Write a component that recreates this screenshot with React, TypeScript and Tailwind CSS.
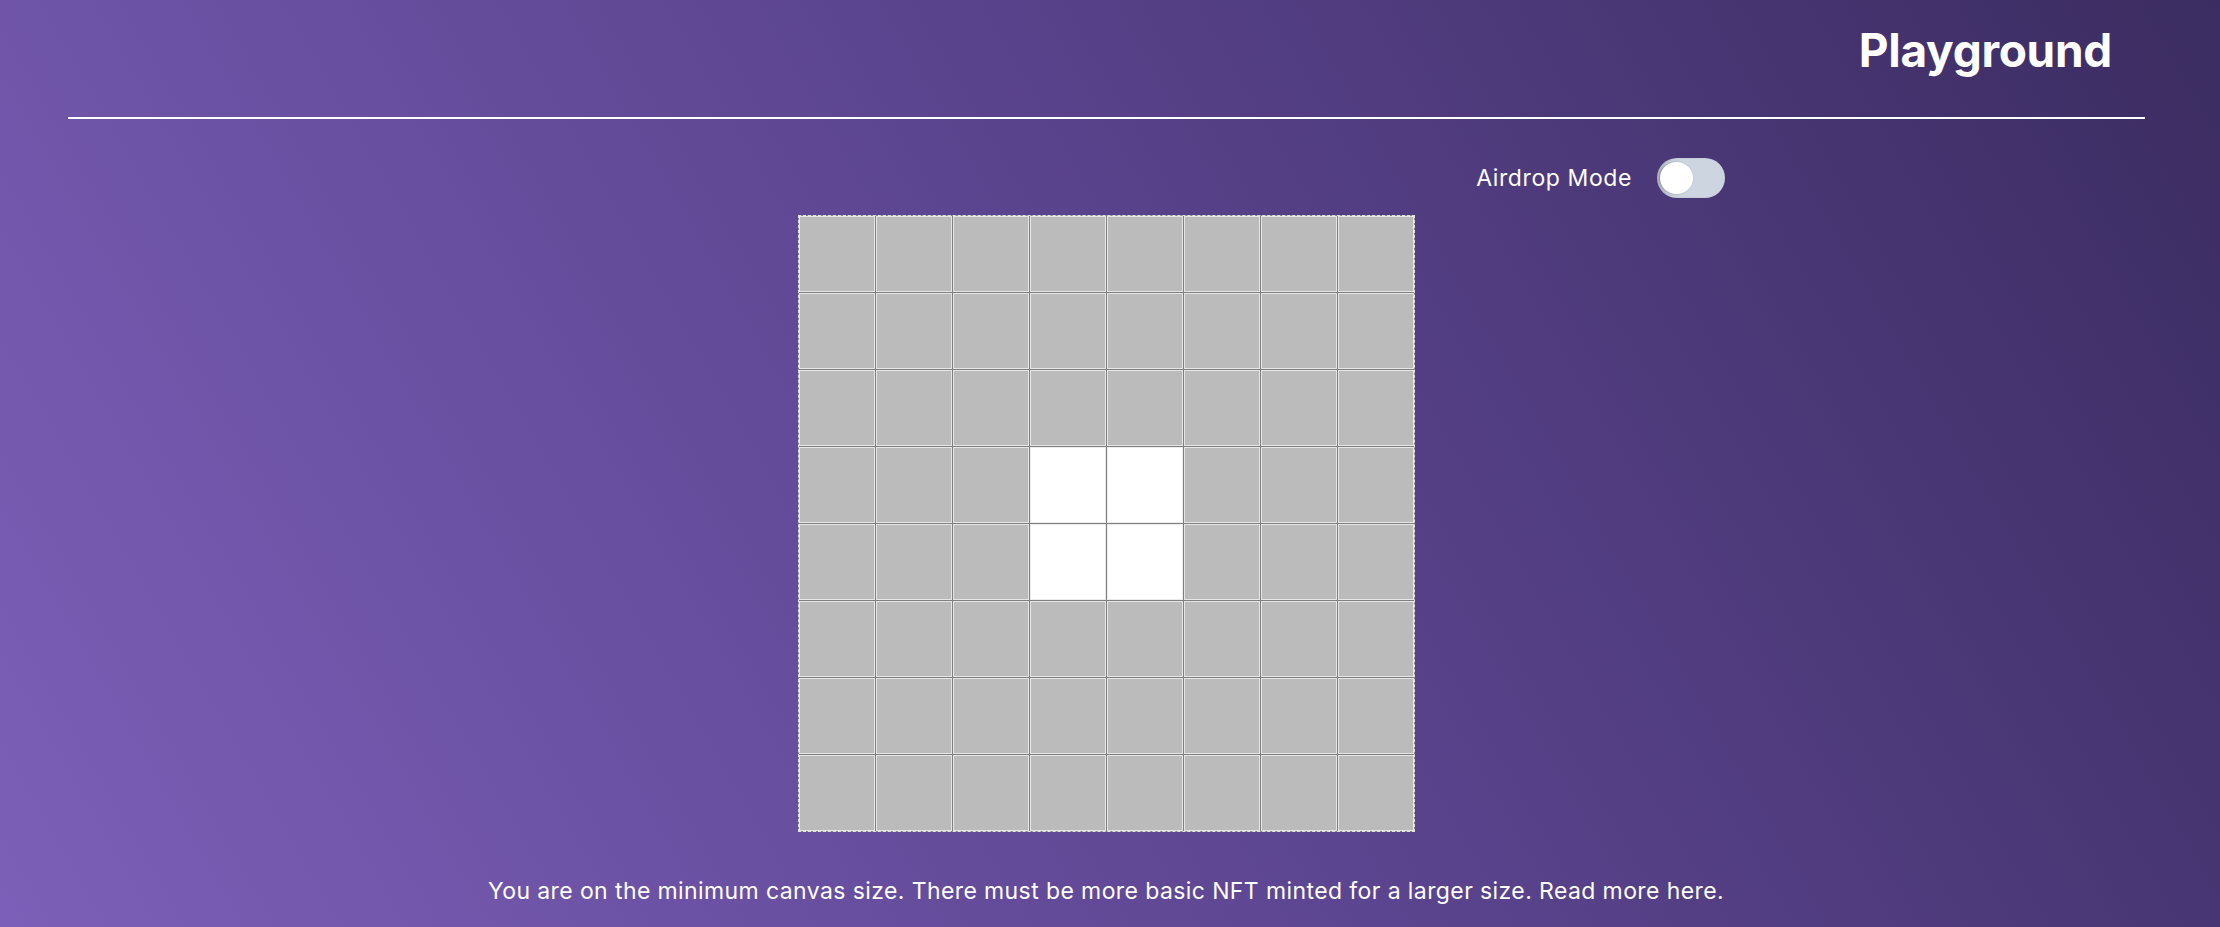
const SIZE = 8;
const lit = new Set(["3-3", "3-4", "4-3", "4-4"]);

const Toggle = () => (
  <div className="relative w-[68px] h-[40px] rounded-full bg-[#cdd5e0] shadow-[inset_2px_0_2px_rgba(0,0,0,0.15)]">
    <div className="absolute left-[3px] top-[4px] w-[33px] h-[32px] rounded-full bg-white shadow-[-1px_0_2px_rgba(0,0,0,0.35)]" />
  </div>
);

export default function App() {
  return (
    <div className="w-full min-h-[927px] bg-linear-60 from-[#7c5fb8] via-[#5c4590] to-[#3b2c61] font-['Inter',sans-serif] text-white">
      <div className="flex justify-end pt-[26px] pr-[108px]">
        <h1 className="text-[46px] leading-[48px] font-bold tracking-[-0.3px]">Playground</h1>
      </div>
      <div className="ml-[68px] mr-[75px] mt-[43px] h-[2px] bg-white" />

      <div className="flex justify-end items-center gap-[25px] mt-[39px] pr-[495px]">
        <span className="text-[23px] leading-[28px] tracking-[0.6px]">Airdrop Mode</span>
        <Toggle />
      </div>

      <div className="flex justify-center mt-[17px] pr-[8px]">
        <div className="grid grid-cols-8 gap-px bg-[#7f7f7f] border border-dashed border-[#e2e2e2]">
          {Array.from({ length: SIZE * SIZE }).map((_, i) => {
            const r = Math.floor(i / SIZE);
            const c = i % SIZE;
            const on = lit.has(`${r}-${c}`);
            return (
              <div
                key={i}
                className={
                  on
                    ? "w-[76px] h-[76px] bg-white border border-[#ececec]"
                    : "w-[76px] h-[76px] bg-[#bbbbbb] border border-[#e6e6e6]"
                }
              />
            );
          })}
        </div>
      </div>

      <p className="text-center text-[23px] leading-[28px] tracking-[0.4px] mt-[45px] pr-[8px] pb-[23px]">
        You are on the minimum canvas size. There must be more basic NFT minted for a larger size. Read more here.
      </p>
    </div>
  );
}
